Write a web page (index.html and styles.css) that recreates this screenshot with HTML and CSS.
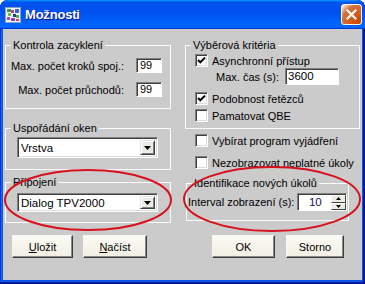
FILE: index.html
```html
<!DOCTYPE html>
<html lang="cs">
<head>
<meta charset="utf-8">
<title>Možnosti</title>
<link rel="stylesheet" href="styles.css">
</head>
<body>
<div class="window">
  <div class="titlebar">
    <svg class="appicon" width="16" height="16" viewBox="0 0 16 16">
      <rect x="0.5" y="0.5" width="15" height="15" fill="#f4f6fa" stroke="#8fa0bc"/>
      <rect x="2" y="2" width="4" height="3" fill="#2f9a45"/>
      <rect x="6" y="3" width="3" height="3" fill="#c03a9a"/>
      <rect x="10" y="2" width="4" height="4" fill="#3b63c9"/>
      <rect x="3" y="6" width="3" height="3" fill="#6fbf3a"/>
      <rect x="8" y="7" width="3" height="3" fill="#1f3f9f"/>
      <rect x="11" y="8" width="3" height="3" fill="#59b04f"/>
      <rect x="2" y="10" width="3" height="3" fill="#a04fc8"/>
      <rect x="6" y="11" width="4" height="3" fill="#8c3fc0"/>
      <rect x="11" y="12" width="3" height="2" fill="#d04848"/>
    </svg>
    <span class="title">Možnosti</span>
    <div class="close">
      <svg width="11" height="11" viewBox="0 0 11 11"><path d="M1.5 1.5L9.5 9.5M9.5 1.5L1.5 9.5" stroke="#fff" stroke-width="2.2" stroke-linecap="square"/></svg>
    </div>
  </div>
  <div class="client">
    <div class="col col-left">
      <fieldset class="grp grp-kontrola">
        <legend>Kontrola zacyklení</legend>
        <div class="grp-body">
          <div class="frow"><span class="lbl">Max. počet kroků spoj.:</span><span class="edit num">99</span></div>
          <div class="frow"><span class="lbl">Max. počet průchodů:</span><span class="edit num">99</span></div>
        </div>
      </fieldset>
      <fieldset class="grp grp-okna">
        <legend>Uspořádání oken</legend>
        <div class="grp-body">
          <div class="combo combo-okna"><span class="combo-text">Vrstva</span><span class="drop"><svg width="7" height="4" viewBox="0 0 7 4"><path d="M0 0H7L3.5 4Z" fill="#000"/></svg></span></div>
        </div>
      </fieldset>
      <fieldset class="grp grp-pripojeni">
        <legend>Připojení</legend>
        <div class="grp-body">
          <div class="combo combo-pripojeni"><span class="combo-text">Dialog TPV2000</span><span class="drop"><svg width="7" height="4" viewBox="0 0 7 4"><path d="M0 0H7L3.5 4Z" fill="#000"/></svg></span></div>
        </div>
      </fieldset>
      <div class="btnrow btnrow-left">
        <button class="btn btn-ulozit"><u>U</u>ložit</button>
        <button class="btn btn-nacist"><u>N</u>ačíst</button>
      </div>
    </div>
    <div class="col col-right">
      <fieldset class="grp grp-vyber">
        <legend>Výběrová kritéria</legend>
        <div class="grp-body">
          <div class="cbrow"><span class="cb"><svg width="9" height="9" viewBox="0 0 9 9"><path d="M1 4L3.3 6.3L8 1.6" stroke="#000" stroke-width="2" fill="none"/></svg></span><span>Asynchronní přístup</span></div>
          <div class="frow frow-cas"><span class="lbl">Max. čas (s):</span><span class="edit edit-cas">3600</span></div>
          <div class="cbrow cb-podobnost"><span class="cb"><svg width="9" height="9" viewBox="0 0 9 9"><path d="M1 4L3.3 6.3L8 1.6" stroke="#000" stroke-width="2" fill="none"/></svg></span><span>Podobnost řetězců</span></div>
          <div class="cbrow cb-qbe"><span class="cb"></span><span>Pamatovat QBE</span></div>
        </div>
      </fieldset>
      <div class="cbrow cb-vybirat"><span class="cb"></span><span>Vybírat program vyjádření</span></div>
      <div class="cbrow cb-nezobr"><span class="cb"></span><span>Nezobrazovat neplatné úkoly</span></div>
      <fieldset class="grp grp-ident">
        <legend>Identifikace nových úkolů</legend>
        <div class="grp-body">
          <div class="frow frow-interval">
            <span class="lbl">Interval zobrazení (s):</span>
            <span class="spin">
              <span class="spin-val">10</span>
              <span class="spin-btns">
                <span class="spin-btn"><svg width="5" height="3" viewBox="0 0 5 3"><path d="M0 3H5L2.5 0Z" fill="#000"/></svg></span>
                <span class="spin-btn"><svg width="5" height="3" viewBox="0 0 5 3"><path d="M0 0H5L2.5 3Z" fill="#000"/></svg></span>
              </span>
            </span>
          </div>
        </div>
      </fieldset>
      <div class="btnrow btnrow-right">
        <button class="btn btn-ok">OK</button>
        <button class="btn btn-storno">Storno</button>
      </div>
    </div>
  </div>
  <svg class="marks" width="365" height="284" viewBox="0 0 365 284">
    <ellipse cx="88" cy="200" rx="83" ry="30" fill="none" stroke="#d8101c" stroke-width="2"/>
    <ellipse cx="272" cy="199" rx="88" ry="32" fill="none" stroke="#d8101c" stroke-width="2"/>
  </svg>
</div>
</body>
</html>
```
FILE: styles.css
```css
* { box-sizing: border-box; }

body {
  margin: 0;
  background: #ffffff;
  font-family: "Liberation Sans", Arial, sans-serif;
  font-size: 11px;
  color: #000;
}

.window {
  position: relative;
  width: 365px;
  height: 284px;
  display: flex;
  flex-direction: column;
  background: #0a55e6;
  border-radius: 8px 8px 0 0;
  overflow: hidden;
  box-shadow: inset -1px -1px #00138c, inset 1px 1px #0831d9, inset -2px -2px #001ea0, inset 2px 2px #166aee;
}

.titlebar {
  height: 29px;
  flex: none;
  display: flex;
  align-items: center;
  padding: 0 3px 0 5px;
  border-radius: 8px 8px 0 0;
  background: linear-gradient(180deg, #0997ff, #0053ee 8%, #0050ee 40%, #0066ff 88%, #0066ff 93%, #005bff 95%, #003dd7 96%, #003dd7);
}

.appicon { flex: none; margin-top: 1px; }

.title {
  margin-left: 4px;
  color: #fff;
  font-weight: bold;
  font-size: 13px;
  letter-spacing: -0.2px;
  text-shadow: 1px 1px #0f1089;
}

.close {
  margin-left: auto;
  width: 21px;
  height: 21px;
  border: 1px solid #fff;
  border-radius: 3px;
  background: radial-gradient(circle at 90% 90%, #cc4600 0%, #dc6527 55%, #cd7546 70%, #ffccb2 90%, #fff 100%);
  display: flex;
  align-items: center;
  justify-content: center;
}

.client {
  flex: 1;
  margin: 0 3px 4px;
  background: #cbcbcb;
  display: grid;
  grid-template-columns: 166px 175px;
  column-gap: 14px;
  padding: 0 2px;
  align-items: start;
}

.col {
  display: flex;
  flex-direction: column;
  padding-top: 10px;
}

.grp {
  margin: 0;
  padding: 0;
  min-width: 0;
  border: 1px solid #fbfbfb;
}

.grp legend {
  margin-left: 5px;
  padding: 0 2px;
  height: 13px;
  line-height: 13px;
  font-size: 11px;
}

.frow {
  display: flex;
  align-items: center;
}

.lbl { white-space: nowrap; }

.edit {
  background: #fff;
  border: 1px solid;
  border-color: #808080 #fff #fff #808080;
  box-shadow: inset 1px 1px #404040;
  white-space: nowrap;
}

/* Kontrola zacyklení */
.grp-kontrola .grp-body {
  padding: 6px 8px 11px 0;
  display: flex;
  flex-direction: column;
  gap: 9px;
}
.grp-kontrola .frow { justify-content: flex-end; gap: 12px; }
.num {
  width: 26px;
  height: 15px;
  line-height: 13px;
  padding-left: 3px;
}

/* combos */
.grp-okna { margin-top: 13px; }
.grp-okna .grp-body { padding: 2px 0 11px 11px; }
.grp-pripojeni { margin-top: 6px; }
.grp-pripojeni .grp-body { padding: 4px 0 10px 11px; }

.combo {
  width: 141px;
  display: flex;
  align-items: stretch;
  background: #fff;
  border: 1px solid;
  border-color: #808080 #fff #fff #808080;
  box-shadow: inset 1px 1px #404040, inset -1px -1px #dcdcdc;
  padding: 2px;
}
.combo-okna { height: 21px; }
.combo-pripojeni { height: 19px; }

.combo-text {
  flex: 1;
  padding-left: 1px;
  display: flex;
  align-items: center;
  font-size: 11.5px;
}

.drop {
  width: 15px;
  display: flex;
  align-items: center;
  justify-content: center;
  background: #ecebe4;
  border: 1px solid;
  border-color: #e4e4e4 #404040 #404040 #e4e4e4;
  box-shadow: inset 1px 1px #fff, inset -1px -1px #808080;
}

/* buttons */
.btnrow {
  display: flex;
  margin-top: 12px;
}
.btnrow-left { padding-left: 7px; gap: 10px; }
.btnrow-right { margin-top: 14px; padding-left: 27px; gap: 11px; }

.btn {
  height: 23px;
  padding: 0;
  font-family: "Liberation Sans", Arial, sans-serif;
  font-size: 11px;
  color: #000;
  background: linear-gradient(180deg, #fbfaf4, #f1efe3);
  border: 1px solid;
  border-color: #f8f8f8 #3c3c3c #3c3c3c #f8f8f8;
  box-shadow: inset -1px -1px #8a8a8a;
}
.btn-ulozit { width: 61px; }
.btn-nacist { width: 64px; }
.btn-ok { width: 63px; }
.btn-storno { width: 58px; }

/* checkboxes */
.cbrow {
  display: flex;
  align-items: center;
  gap: 4px;
  height: 13px;
  white-space: nowrap;
}
.cb {
  flex: none;
  width: 13px;
  height: 13px;
  background: #fff;
  border: 1px solid;
  border-color: #808080 #fff #fff #808080;
  box-shadow: inset 1px 1px #404040, inset -1px -1px #dcdcdc;
  display: flex;
  align-items: center;
  justify-content: center;
}

.grp-vyber .grp-body { padding: 2px 0 6px 9px; display: flex; flex-direction: column; }
.frow-cas { margin-top: 1px; padding-left: 21px; padding-right: 20px; }
.edit-cas {
  margin-left: auto;
  width: 54px;
  height: 17px;
  line-height: 15px;
  padding-left: 2px;
  font-size: 11.5px;
}
.cb-podobnost { margin-top: 7px; }
.cb-qbe { margin-top: 4px; }

.cb-vybirat { margin-top: 5px; margin-left: 10px; }
.cb-nezobr { margin-top: 9px; margin-left: 10px; }

/* Identifikace */
.grp-ident { margin-top: 8px; margin-left: 1px; width: 163px; }
.grp-ident .grp-body { padding: 3px 0 9px 1px; }
.frow-interval { gap: 3px; }

.spin {
  width: 50px;
  height: 18px;
  display: flex;
  background: #fff;
  border: 1px solid;
  border-color: #808080 #fff #fff #808080;
  box-shadow: inset 1px 1px #404040;
  padding: 1px 0 0 1px;
}
.spin-val {
  flex: 1;
  text-align: center;
  line-height: 15px;
  color: #14145a;
  font-size: 11.5px;
}
.spin-btns {
  width: 15px;
  display: flex;
  flex-direction: column;
}
.spin-btn {
  flex: 1;
  display: flex;
  align-items: center;
  justify-content: center;
  background: #ecebe4;
  border: 1px solid;
  border-color: #fff #404040 #404040 #fff;
}

.marks {
  position: absolute;
  left: 0;
  top: 0;
  pointer-events: none;
}
```
